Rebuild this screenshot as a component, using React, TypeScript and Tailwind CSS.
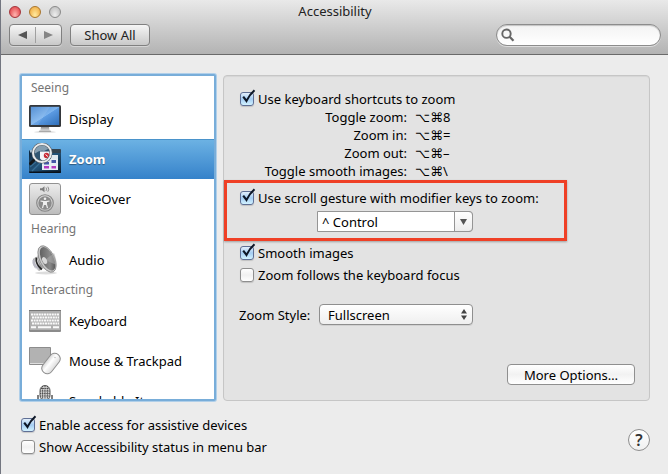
import { useState } from 'react';
import type { ReactNode } from 'react';

function DisplayIcon() {
  return (
    <svg viewBox="0 0 32 32" className="size-8 shrink-0" aria-hidden="true">
      <defs>
        <linearGradient id="screen" x1="0" y1="0" x2="1" y2="1">
          <stop offset="0" stopColor="#4384cf" />
          <stop offset="0.5" stopColor="#7db4ee" />
          <stop offset="0.52" stopColor="#5c9be2" />
          <stop offset="1" stopColor="#2f6fba" />
        </linearGradient>
        <linearGradient id="stand" x1="0" y1="0" x2="0" y2="1">
          <stop offset="0" stopColor="#8f8f8f" />
          <stop offset="1" stopColor="#dedede" />
        </linearGradient>
      </defs>
      <ellipse cx="16" cy="29" rx="11" ry="1.2" fill="#e3e3e3" />
      <path d="M12 24h8l.6 3.6H11.400z" fill="url(#stand)" />
      <path d="M10.500 27.600h11l.8 1.300H9.700z" fill="#a9a9a9" />
      <rect x="0" y="2" width="32" height="22" rx="1.500" fill="#34373b" />
      <rect x="1.800" y="3.800" width="28.400" height="18.200" fill="url(#screen)" />
      <path d="M21 3.800 9 22H1.800V3.800z" fill="#fff" opacity="0.1" />
    </svg>
  );
}

function ZoomIcon() {
  return (
    <svg viewBox="0 0 32 32" className="size-8 shrink-0" aria-hidden="true">
      <defs>
        <linearGradient id="desk" x1="0" y1="0" x2="1" y2="1">
          <stop offset="0" stopColor="#0c2338" />
          <stop offset="0.500" stopColor="#23547a" />
          <stop offset="1" stopColor="#0a1a2b" />
        </linearGradient>
      </defs>
      <rect x="0" y="7" width="32" height="23" rx="1.500" fill="url(#desk)" />
      <rect x="1" y="7" width="30" height="2.500" fill="#9fb9cb" />
      <rect x="21" y="6" width="11" height="4" rx="1" fill="#33424f" />
      <path d="M0 28.500h32v.5a1 1 0 0 1-1 1H1a1 1 0 0 1-1-1z" fill="#07101a" />
      <path d="M3 28 12 19M1 24l6-5" stroke="#437ca3" strokeWidth="1.200" opacity="0.7" />
      <path d="M13 16h16v11H13z" fill="#e6edf4" />
      <path d="M22 12h7v4h-7z" fill="#dfe8f0" />
      <path d="M15 19h5v2.500h-5zM22.500 17h4.500v3h-4.500z" fill="#4457a8" />
      <path d="M15 23h5v2.500h-5zM22.500 23h4.500v2.500h-4.500z" fill="#b23ac0" />
      <circle cx="13" cy="10" r="8.600" fill="#315672" />
      <path d="M11 8.500h10v5.500a8.600 8.600 0 0 1-7 4.500l-3-3z" fill="#f3f5f8" />
      <circle cx="17.500" cy="12.500" r="2.700" fill="#c82c37" />
      <path d="M16.500 11.500l2.400 2" stroke="#fff" strokeWidth="1" />
      <path d="M5 9.500A8 8 0 0 1 20 5.500L15 8c-4-.8-6 .5-9 2.500z" fill="#d9e5ed" opacity="0.5" />
      <circle cx="13" cy="10" r="9" fill="none" stroke="#59626a" strokeWidth="3" />
      <circle cx="13" cy="10" r="9" fill="none" stroke="#e8ebed" strokeWidth="1.900" />
      <path d="M4.500 17.500 1.500 20.500" stroke="#14181b" strokeWidth="3" strokeLinecap="round" />
    </svg>
  );
}

function VoiceOverIcon() {
  return (
    <svg viewBox="0 0 32 32" className="size-8 shrink-0" aria-hidden="true">
      <defs>
        <linearGradient id="plate" x1="0" y1="0" x2="0" y2="1">
          <stop offset="0" stopColor="#ececec" />
          <stop offset="1" stopColor="#bcbcbc" />
        </linearGradient>
      </defs>
      <rect x="0.500" y="0.500" width="31" height="31" rx="2.500" fill="url(#plate)" stroke="#929292" />
      <path d="M11 5.200h2l2.500-2v6l-2.500-2h-2z" fill="#7c7c7c" />
      <path d="M17 4.500q1.300 1.700 0 3.400M18.800 3.700q2 2.500 0 5" fill="none" stroke="#858585" strokeWidth="0.900" />
      <circle cx="16" cy="20" r="8.300" fill="none" stroke="#868686" strokeWidth="1.100" />
      <circle cx="16" cy="20" r="6.700" fill="#8b8b8b" />
      <circle cx="16" cy="15.800" r="1.300" fill="#eee" />
      <path d="M11.500 18l3.100.6v2.500l-1.100 4M20.500 18l-3.100.6v2.500l1.100 4" fill="none" stroke="#eee" strokeWidth="1.200" />
      <path d="M14.300 18h3.400v4h-3.400z" fill="#eee" />
    </svg>
  );
}

function AudioIcon() {
  return (
    <svg viewBox="0 0 32 32" className="size-8 shrink-0" aria-hidden="true">
      <defs>
        <linearGradient id="cone" x1="0" y1="0" x2="1" y2="1">
          <stop offset="0" stopColor="#555" />
          <stop offset="0.600" stopColor="#8a8a8a" />
          <stop offset="1" stopColor="#3e3e3e" />
        </linearGradient>
        <linearGradient id="magnet" x1="0" y1="0" x2="1" y2="0">
          <stop offset="0" stopColor="#8a8a8a" />
          <stop offset="0.300" stopColor="#f4f4f4" />
          <stop offset="0.700" stopColor="#8d8d8d" />
          <stop offset="1" stopColor="#dadada" />
        </linearGradient>
      </defs>
      <ellipse cx="17" cy="29" rx="11" ry="1.500" fill="#ddd" />
      <path d="M4 15 8 12l7 12-5 3q-7-3-6-12z" fill="url(#magnet)" />
      <path d="M3.500 16q-1 6 5 9l1.600-1.500Q5 20.500 5.500 15z" fill="#b9b9c4" />
      <path d="M7.200 13.500q-.8 7 5.600 12" fill="none" stroke="#242424" strokeWidth="1.600" />
      <path d="M9.500 10.500 8.500 15q2 6 6 9l4 2.500z" fill="#dcdcdc" stroke="#777" strokeWidth="0.600" />
      <ellipse cx="18" cy="15" rx="7.400" ry="14.300" transform="rotate(-26 18 15)" fill="#c9c9c9" stroke="#7a7a7a" strokeWidth="0.700" />
      <ellipse cx="18.600" cy="14.800" rx="6" ry="12.700" transform="rotate(-26 18.600 14.800)" fill="url(#cone)" />
      <path d="m16 16 9-7q3 7 2.500 12z" fill="#a9a9a9" opacity="0.6" />
      <ellipse cx="15.600" cy="16.500" rx="2.200" ry="3.700" transform="rotate(-26 15.600 16.500)" fill="#d9d9d9" />
    </svg>
  );
}

function KeyboardIcon() {
  const rows = [9, 12, 15, 18];
  return (
    <svg viewBox="0 0 32 32" className="size-8 shrink-0" aria-hidden="true">
      <rect x="0" y="5" width="32" height="22" rx="1" fill="#8b8b8b" />
      <rect x="0.600" y="5" width="30.800" height="20" rx="0.500" fill="#b0b0b0" />
      <path d="M0 5.500h32" stroke="#777" />
      {rows.map((y, i) => (
        <path key={y} d={`M${2 + (i % 2)} ${y + 0.5}H30`} stroke="#fafafa" strokeWidth="2.100" strokeDasharray="2 0.600" />
      ))}
      <path d="M2 22.300h5M9 22.300h13M24 22.300h6" stroke="#fafafa" strokeWidth="2" />
    </svg>
  );
}

function MouseIcon() {
  return (
    <svg viewBox="0 0 32 32" className="size-8 shrink-0" aria-hidden="true">
      <defs>
        <linearGradient id="shell" x1="0" y1="0" x2="1" y2="0">
          <stop offset="0" stopColor="#d6d6d6" />
          <stop offset="0.400" stopColor="#fff" />
          <stop offset="1" stopColor="#dcdcdc" />
        </linearGradient>
      </defs>
      <path d="M.5 2.500h21v17H.5z" fill="#b2b2b2" stroke="#8c8c8c" />
      <path d="M1 18.500h20" stroke="#dedede" />
      <rect x="16.500" y="7" width="11" height="23" rx="5.300" transform="rotate(38 22 18.500)" fill="url(#shell)" stroke="#8e8e8e" />
      <circle cx="26" cy="12.500" r="0.800" fill="#c4c4c4" />
    </svg>
  );
}

function MicIcon() {
  return (
    <svg viewBox="0 0 32 32" className="size-8 shrink-0" aria-hidden="true">
      <rect x="11" y="0.500" width="10" height="15" rx="5" fill="#d0d0d0" stroke="#555" />
      <path d="M12 3.500h8M11 6h10M11 8.500h10M11 11h10M13.500 1v13M16 1v14M18.500 1v13" stroke="#444" strokeWidth="0.900" strokeDasharray="1.300 0.800" />
      <path d="M9 10v4q0 6 7 6t7-6v-4" fill="none" stroke="#737373" strokeWidth="1.800" />
      <path d="M14 14h4v16h-4z" fill="#666" />
      <path d="M15.500 14h1v16h-1z" fill="#f5f5f5" />
    </svg>
  );
}

function CheckBox({ label, initial = false, compact = false }: { label: string; initial?: boolean; compact?: boolean }) {
  const [on, setOn] = useState(initial);
  return (
    <label className={`flex items-center gap-1 ${compact ? 'h-[18px]' : 'h-[22px]'}`}>
      <span className="relative flex">
        <input
          type="checkbox"
          checked={on}
          onChange={(e) => setOn(e.target.checked)}
          className="peer size-[14px] appearance-none rounded-[3px] border border-[#8e8e8e] bg-linear-to-b from-white via-[#f1f1f1] to-white shadow-[0_1px_1px_rgba(0,0,0,0.15)] checked:border-[#5f6f95] checked:from-[#e3effb] checked:via-[#a4cdf3] checked:to-[#d2f2ff]"
        />
        <svg viewBox="0 0 16 16" className="pointer-events-none absolute -top-[3px] left-0 hidden size-4 peer-checked:block" aria-hidden="true">
          <path d="M3.200 7.600 6.500 11.900 Q9.500 5.500 14.500 1.200" fill="none" stroke="#0d1626" strokeWidth="2.100" />
        </svg>
      </span>
      {label}
    </label>
  );
}

function Item({ icon, name, active = false }: { icon: ReactNode; name: string; active?: boolean }) {
  return (
    <li>
      <button
        aria-current={active}
        className="flex h-10 w-full items-center gap-2 pl-[7px] text-left aria-[current=true]:bg-linear-to-b aria-[current=true]:from-[#6db3e4] aria-[current=true]:to-[#3582ca] aria-[current=true]:font-bold aria-[current=true]:text-white aria-[current=true]:shadow-[inset_0_1px_0_#4a93cb] aria-[current=true]:text-shadow-[0_1px_1px_rgba(0,0,0,0.4)]"
      >
        {icon}
        <span>{name}</span>
      </button>
    </li>
  );
}

function Heading({ children }: { children: ReactNode }) {
  return <h2 className="h-[21px] pl-[9px] text-[12px] leading-[20px] text-[#757575]">{children}</h2>;
}

const shortcuts = [
  ['Toggle zoom:', '⌥⌘8'],
  ['Zoom in:', '⌥⌘='],
  ['Zoom out:', '⌥⌘–'],
  ['Toggle smooth images:', '⌥⌘\\'],
];

const toolButton = 'h-[22px] rounded-[4px] border border-[#808080] bg-linear-to-b from-[#f6f6f6] to-[#c9c9c9] shadow-[0_1px_0_rgba(255,255,255,0.4)]';

export default function App() {
  return (
    <div className="flex min-h-screen flex-col border-l border-[#737680] bg-[#ececec] font-['Noto_Sans','DejaVu_Sans',sans-serif] text-[13px] leading-[18px] text-black">
      <header className="flex h-[55px] flex-col border-b border-[#6a6a6a] bg-linear-to-b from-[#e9e9e9] to-[#b3b3b3] pr-[7px] pl-2">
        <div className="grid h-6 grid-cols-[1fr_auto_1fr] items-center">
          <div className="flex gap-2">
            <button aria-label="Close" className="size-3 rounded-full border border-[#a4343a] bg-radial-[at_50%_80%] from-[#ffb5b0] to-[#dd3239]" />
            <button aria-label="Minimize" className="size-3 rounded-full border border-[#a9762d] bg-radial-[at_50%_80%] from-[#ffeaa0] to-[#eda233]" />
            <button aria-label="Zoom window" className="size-3 rounded-full border border-[#8a8a8a] bg-radial-[at_50%_80%] from-[#eeeeee] to-[#b5b5b5]" />
          </div>
          <h1 className="pb-[2px] text-[#222]">Accessibility</h1>
        </div>
        <div className="flex items-center">
          <div className={`flex w-[53px] items-center ${toolButton}`}>
            <button aria-label="Back" className="flex h-4 flex-1 items-center justify-center border-r border-[#a0a0a0]">
              <svg viewBox="0 0 9 8" className="h-2 w-[9px]"><path d="M9 0v8L0 4z" fill="#555" /></svg>
            </button>
            <button aria-label="Forward" className="flex h-4 flex-1 items-center justify-center">
              <svg viewBox="0 0 9 8" className="h-2 w-[9px]"><path d="M0 0v8l9-4z" fill="#858585" /></svg>
            </button>
          </div>
          <button className={`ml-2 w-20 leading-[18px] text-[#222] ${toolButton}`}>Show All</button>
          <div className="relative ml-auto flex">
            <input
              type="search"
              aria-label="Search"
              className="h-[22px] w-[165px] appearance-none rounded-full border border-[#8c8c8c] bg-linear-to-b from-[#f3f3f3] to-white pr-2 pl-6 shadow-[inset_0_1px_1px_rgba(0,0,0,0.2),0_1px_0_rgba(255,255,255,0.5)] outline-none"
            />
            <svg viewBox="0 0 14 14" className="absolute top-1 left-[5px] size-[14px]" aria-hidden="true">
              <circle cx="5.500" cy="5.700" r="4.200" fill="none" stroke="#666" strokeWidth="1.900" />
              <path d="M8.600 8.800 12.500 12.700" stroke="#666" strokeWidth="2.300" />
            </svg>
          </div>
        </div>
      </header>

      <main className="flex gap-[7px] pt-5 pr-[18px] pl-[19px]">
        <nav aria-label="Accessibility features" className="-mt-px h-[327px] w-[196px] shrink-0 overflow-hidden rounded-[2px] border-2 border-[#78add9] bg-white pt-[2px] shadow-[0_0_0_1px_#b0cfe9]">
          <Heading>Seeing</Heading>
          <ul>
            <Item icon={<DisplayIcon />} name="Display" />
            <Item icon={<ZoomIcon />} name="Zoom" active />
            <Item icon={<VoiceOverIcon />} name="VoiceOver" />
          </ul>
          <Heading>Hearing</Heading>
          <ul>
            <Item icon={<AudioIcon />} name="Audio" />
          </ul>
          <Heading>Interacting</Heading>
          <ul>
            <Item icon={<KeyboardIcon />} name="Keyboard" />
            <Item icon={<MouseIcon />} name="Mouse & Trackpad" />
            <Item icon={<MicIcon />} name="Speakable Items" />
          </ul>
        </nav>

        <section aria-label="Zoom" className="flex flex-1 flex-col rounded-[4px] border border-[#c6c6c6] bg-[#e3e3e3] pt-[14px] shadow-[inset_0_1px_1px_rgba(0,0,0,0.06)]">
          <div className="pl-4">
            <CheckBox label="Use keyboard shortcuts to zoom" initial compact />
            <dl className="grid grid-cols-[167px_1fr] gap-x-2">
              {shortcuts.map(([name, keys]) => (
                <div key={name} className="col-span-2 grid h-[18px] grid-cols-subgrid">
                  <dt className="text-right whitespace-nowrap">{name}</dt>
                  <dd>{keys}</dd>
                </div>
              ))}
            </dl>
          </div>
          <div className="h-[61px] w-[343px] border-3 border-[#ef4026] pt-1 pl-[13px] shadow-[0_1px_2px_rgba(0,0,0,0.3)]">
            <CheckBox label="Use scroll gesture with modifier keys to zoom:" initial />
            <div className="relative mt-[2px] ml-[77px] flex w-[156px]">
              <select aria-label="Modifier key" className="h-[21px] w-full appearance-none rounded-r-[4px] border border-[#959595] bg-white pl-1 leading-[18px]">
                <option>^ Control</option>
                <option>⌥ Option</option>
                <option>⌘ Command</option>
              </select>
              <span className="pointer-events-none absolute top-0 right-0 flex h-[21px] w-[19px] items-center justify-center rounded-r-[4px] border border-[#959595] bg-linear-to-b from-white to-[#ececec]">
                <svg viewBox="0 0 7 6" className="h-[6px] w-[7px]"><path d="M0 0h7L3.500 6z" fill="#555" /></svg>
              </span>
            </div>
          </div>
          <div className="pt-[1px] pl-4">
            <CheckBox label="Smooth images" initial />
            <CheckBox label="Zoom follows the keyboard focus" />
          </div>
          <div className="mt-[18px] flex items-center pl-[15px]">
            <label htmlFor="style" className="w-[80px]">Zoom Style:</label>
            <div className="relative flex w-[154px]">
              <select id="style" className="h-[21px] w-full appearance-none rounded-[4px] border border-[#8f8f8f] bg-linear-to-b from-white to-[#efefef] pl-2 leading-[18px] shadow-[0_1px_0_rgba(0,0,0,0.08)]">
                <option>Fullscreen</option>
                <option>Picture-in-picture</option>
              </select>
              <svg viewBox="0 0 6 11" className="pointer-events-none absolute top-[5px] right-[6px] h-[11px] w-[6px]">
                <path d="M0 4.500h6L3 0zM0 6.500h6L3 11z" fill="#444" />
              </svg>
            </div>
          </div>
          <button className="mt-auto mr-[14px] mb-[15px] h-[21px] w-[128px] self-end rounded-[4px] border border-[#8f8f8f] bg-linear-to-b from-white via-[#f2f2f2] to-white leading-[18px]">
            More Options…
          </button>
        </section>
      </main>

      <footer className="flex items-center justify-between pt-[13px] pr-[18px] pl-5">
        <div>
          <CheckBox label="Enable access for assistive devices" initial />
          <CheckBox label="Show Accessibility status in menu bar" />
        </div>
        <button aria-label="Help" className="mt-[7px] flex size-[22px] items-center justify-center rounded-full border border-[#8f8f8f] bg-linear-to-b from-white to-[#f0f0f0] text-[16px] font-semibold text-[#333]">
          ?
        </button>
      </footer>
    </div>
  );
}
